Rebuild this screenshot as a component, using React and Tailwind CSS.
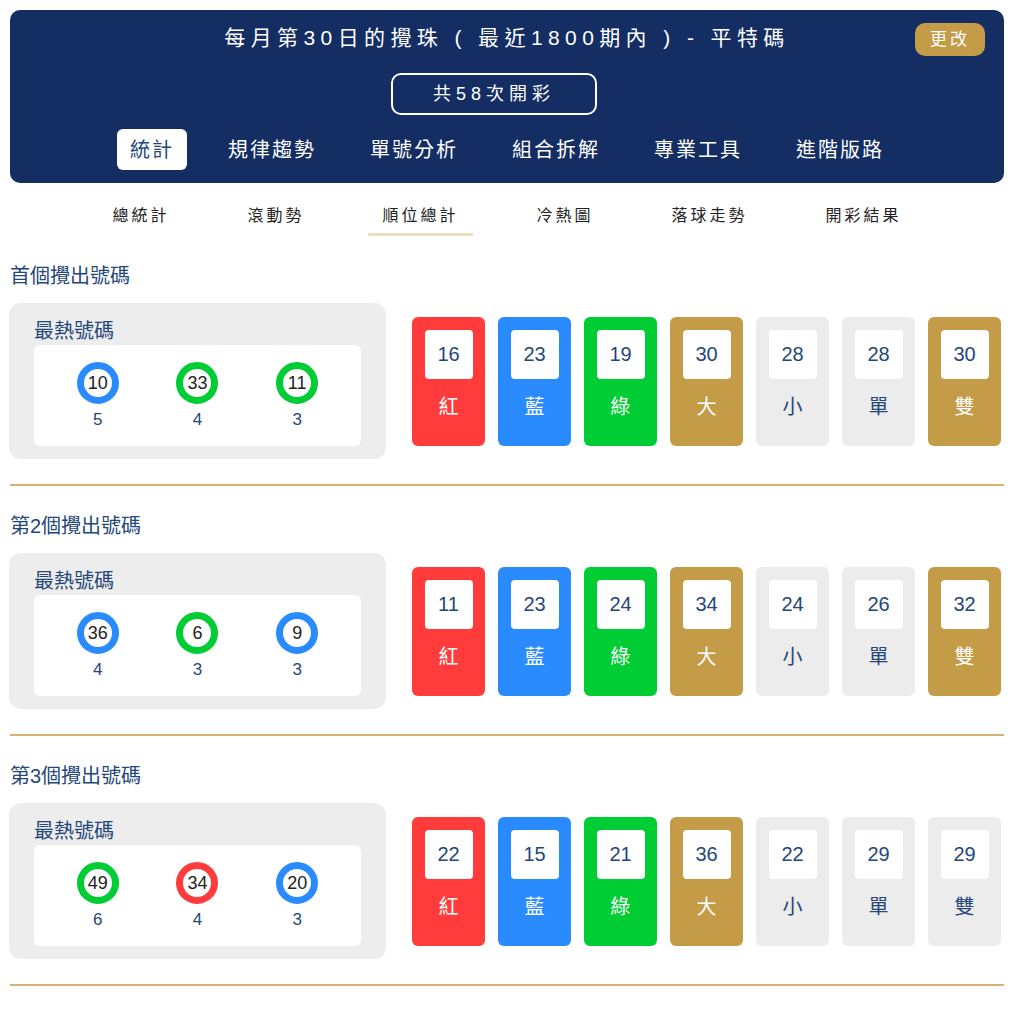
import { useState } from "react";

const font = { fontFamily: '"Liberation Sans", "Noto Sans CJK TC", sans-serif' };

const mainTabs = ["統計", "規律趨勢", "單號分析", "組合拆解", "專業工具", "進階版路"];
const subTabs = ["總統計", "滾動勢", "順位總計", "冷熱圖", "落球走勢", "開彩結果"];

const ringColor = {
  red: "border-[#ff3b3b]",
  blue: "border-[#2a8bff]",
  green: "border-[#00cc33]",
};

const sections = [
  {
    title: "首個攪出號碼",
    hot: [
      { n: "10", c: "blue", count: 5 },
      { n: "33", c: "green", count: 4 },
      { n: "11", c: "green", count: 3 },
    ],
    stats: [16, 23, 19, 30, 28, 28, 30],
    winners: ["大", "雙"],
  },
  {
    title: "第2個攪出號碼",
    hot: [
      { n: "36", c: "blue", count: 4 },
      { n: "6", c: "green", count: 3 },
      { n: "9", c: "blue", count: 3 },
    ],
    stats: [11, 23, 24, 34, 24, 26, 32],
    winners: ["大", "雙"],
  },
  {
    title: "第3個攪出號碼",
    hot: [
      { n: "49", c: "green", count: 6 },
      { n: "34", c: "red", count: 4 },
      { n: "20", c: "blue", count: 3 },
    ],
    stats: [22, 15, 21, 36, 22, 29, 29],
    winners: ["大"],
  },
];

const labels = ["紅", "藍", "綠", "大", "小", "單", "雙"];
const fixedBg = ["bg-[#ff3b3b]", "bg-[#2a8bff]", "bg-[#00cc33]"];

function StatCard({ label, value, active, index }) {
  let bg = "bg-[#ececec]";
  let text = "text-[#24477a]";
  if (index < 3) {
    bg = fixedBg[index];
    text = "text-white";
  } else if (active) {
    bg = "bg-[#c49b47]";
    text = "text-white";
  }
  return (
    <div className={`w-[73px] h-[129px] rounded-md ${bg} flex flex-col items-center pt-[13px]`}>
      <div className="w-[48px] h-[49px] bg-white rounded flex items-center justify-center text-[20px] text-[#24477a]">
        {value}
      </div>
      <div className={`mt-[14px] text-[20px] leading-[28px] ${text}`}>{label}</div>
    </div>
  );
}

function Section({ data }) {
  return (
    <div>
      <div className="pt-[26px] pb-[25px]">
        <h2 className="text-[20px] leading-[28px] text-[#24477a]">{data.title}</h2>
        <div className="mt-[13px] flex items-center gap-[26px]">
          <div className="w-[377px] -ml-px bg-[#ededed] rounded-xl pt-[14px] pl-[25px] pr-[25px] pb-[13px]">
            <div className="text-[20px] leading-[28px] text-[#24477a]">最熱號碼</div>
            <div className="bg-white rounded-md h-[101px] px-[14px] pt-[17px] grid grid-cols-3">
              {data.hot.map((h, i) => (
                <div key={i} className="flex flex-col items-center">
                  <div
                    className={`w-[42px] h-[42px] rounded-full border-[7px] ${ringColor[h.c]} flex items-center justify-center text-[18px] text-[#222]`}
                  >
                    {h.n}
                  </div>
                  <div className="mt-[4px] text-[17px] leading-[24px] text-[#24477a]">{h.count}</div>
                </div>
              ))}
            </div>
          </div>
          <div className="flex gap-[13px]">
            {data.stats.map((v, i) => (
              <StatCard
                key={i}
                index={i}
                label={labels[i]}
                value={v}
                active={data.winners.includes(labels[i])}
              />
            ))}
          </div>
        </div>
      </div>
      <div className="h-[2px] bg-[#d6b272]" />
    </div>
  );
}

export default function App() {
  const [tab, setTab] = useState(0);
  const [sub, setSub] = useState(2);

  return (
    <div style={font} className="bg-white min-h-screen pl-[10px] pr-[19px] pt-[10px]">
      <div className="relative bg-[#142d63] rounded-[10px] pt-[13px] pb-[13px] flex flex-col items-center">
        <h1 className="text-white text-[21px] leading-[30px] tracking-[5.4px]">
          每月第30日的攪珠 ( 最近1800期內 ) - 平特碼
        </h1>
        <button className="absolute right-[19px] top-[13px] w-[70px] h-[33px] rounded-[10px] bg-[#c49b47] text-white text-[17px] tracking-[3px]">
          更改
        </button>
        <div className="mt-[20px] mr-[26px] w-[206px] h-[42px] border-2 border-white rounded-[10px] flex items-center justify-center text-white text-[18px] tracking-[5px]">
          共58次開彩
        </div>
        <div className="mt-[14px] flex justify-center gap-[28px]">
          {mainTabs.map((t, i) => (
            <button
              key={t}
              onClick={() => setTab(i)}
              className={`h-[41px] px-[13px] rounded-md text-[20px] tracking-[2px] ${
                tab === i ? "bg-white text-[#24477a]" : "text-white"
              }`}
            >
              {t}
            </button>
          ))}
        </div>
      </div>

      <div className="flex justify-center gap-[50px] pt-[21px]">
        {subTabs.map((t, i) => (
          <button
            key={t}
            onClick={() => setSub(i)}
            className={`px-[14px] pb-[5px] text-[16px] leading-[24px] tracking-[3px] text-[#222] border-b-[3px] rounded-[1px] ${
              sub === i ? "border-[#ecdfbd]" : "border-transparent"
            }`}
          >
            {t}
          </button>
        ))}
      </div>

      {sections.map((s) => (
        <Section key={s.title} data={s} />
      ))}
    </div>
  );
}
